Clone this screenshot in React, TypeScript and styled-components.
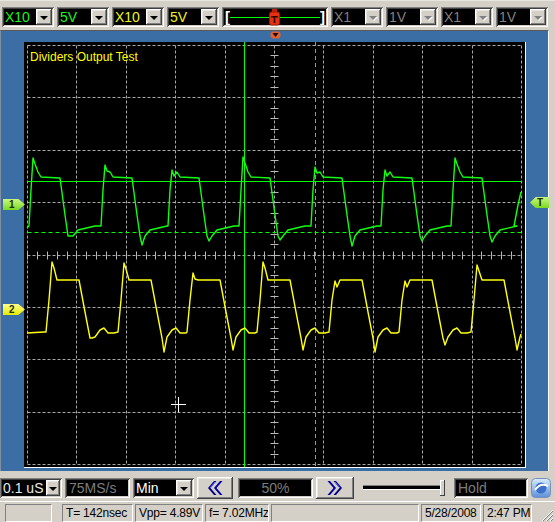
import React from 'react';
import { styled, createGlobalStyle } from 'styled-components';

const GlobalStyle = createGlobalStyle`
	html, body {
		margin: 0;
		padding: 0;
		background: #d4d0c8;
	}
	body {
		font-family: 'Liberation Sans', Arial, sans-serif;
	}
`;

// scope screen geometry, in page pixels
const SX = 24;
const SY = 42;
const SW = 501;
const SH = 425;
const GX = Array.from({ length: 11 }, (_, i) => Math.round(27 + i * 49.4) + 0.5);
const GY = Array.from({ length: 9 }, (_, i) => Math.round(45 + i * 52.375) + 0.5);

type Pt = [number, number];

// [peak x, peak y, undershoot y]
const greenCycles: number[][] = [
	[33, 158, 236],
	[105, 165, 245],
	[172, 170, 241],
	[243, 157, 240],
	[315, 167, 246],
	[385, 170, 241],
	[455, 158, 242],
];

const yellowCycles: number[][] = [
	[52, 262, 338],
	[124, 263, 352],
	[193, 273, 350],
	[263, 262, 350],
	[335, 281, 352],
	[405, 281, 345],
	[477, 265, 350],
];

function greenTrace() {
	const pts: Pt[] = [[27, 228]];
	greenCycles.forEach(([px, py, uy]) => {
		pts.push(
			[px - 4, 226], [px - 2, 190], [px, py], [px + 2, py + 6], [px + 5, 172], [px + 8, 177],
			[px + 27, 178], [px + 32, 215], [px + 35, 236], [px + 37, uy], [px + 40, 236],
			[px + 45, 230], [px + 62, 226],
		);
	});
	pts.push([514, 226], [518, 205], [521, 192]);
	return pts.map((p) => p.join(',')).join(' ');
}

function yellowTrace() {
	const pts: Pt[] = [[27, 333], [44, 332]];
	yellowCycles.forEach(([px, py, uy], i) => {
		pts.push([px - 6, 332], [px - 3, 300], [px, py], [px + 2, py + 6], [px + 5, 280], [px + 27, 280]);
		pts.push([px + 33, 312], [px + 38, 338], [px + 40, uy], [px + 43, 337]);
		if (i < yellowCycles.length - 1) {
			pts.push([px + 48, 330], [px + 52, 328], [px + 56, 333], [px + 62, 333]);
		} else {
			pts.push([521, 334]);
		}
	});
	return pts.map((p) => p.join(',')).join(' ');
}

interface ComboProps {
	text: string;
	color: string;
	width: number;
	button?: number;
	disabled?: boolean;
}

function Combo({ text, color, width, button = 16, disabled }: ComboProps) {
	return (
		<ComboBox $width={width}>
			<ComboText $color={color}>{text}</ComboText>
			<DropButton $width={button}>
				<Arrow $disabled={disabled} />
			</DropButton>
		</ComboBox>
	);
}

function Chevrons({ dir }: { dir: 'left' | 'right' }) {
	const flip = dir === 'right' ? 'scale(-1,1) translate(-16,0)' : undefined;
	return (
		<svg width='16' height='16' viewBox='0 0 16 16'>
			<g transform={flip}>
				<polygon points='7,1 9.5,1 3.5,8 9.5,15 7,15 1,8' fill='#000080' />
				<polygon points='13,1 15.5,1 9.5,8 15.5,15 13,15 7,8' fill='#0000a0' />
				<polyline points='8,2 3,8' stroke='#6070ff' strokeWidth='1' fill='none' />
			</g>
		</svg>
	);
}

function App() {
	const ticksX = Array.from({ length: 51 }, (_, i) => Math.round(27 + i * 9.88) + 0.5);
	const ticksY = Array.from({ length: 41 }, (_, i) => Math.round(45 + i * 10.475) + 0.5);

	return (
		<Window>
			<GlobalStyle />
			<TopBar>
				<Combo text='X10' color='#20f020' width={52} />
				<Combo text='5V' color='#20f020' width={52} />
				<Combo text='X10' color='#f0f020' width={52} />
				<Combo text='5V' color='#f0f020' width={52} />
				<TriggerBar>
					<Bracket>[</Bracket>
					<TriggerLine />
					<TriggerHandle width='11' height='17' viewBox='0 0 11 17'>
						<rect x='3' y='0' width='5' height='3' fill='#c02000' />
						<rect x='0.5' y='3' width='10' height='13' rx='2' fill='#e83010' stroke='#a01800' />
						<rect x='2' y='7' width='7' height='1.5' fill='#300000' />
						<rect x='4.7' y='7' width='1.6' height='7' fill='#300000' />
					</TriggerHandle>
					<Bracket>]</Bracket>
				</TriggerBar>
				<Combo text='X1' color='#808080' width={52} disabled />
				<Combo text='1V' color='#808080' width={52} disabled />
				<Combo text='X1' color='#808080' width={52} disabled />
				<Combo text='1V' color='#808080' width={52} disabled />
			</TopBar>

			<ScopeFrame>
				<TopMarker width='11' height='8' viewBox='0 0 11 8'>
					<rect x='0.5' y='0.5' width='10' height='7' rx='3' fill='#e06030' />
					<polygon points='2.5,2 8.5,2 5.5,6' fill='#200000' />
				</TopMarker>
				<Screen>
					<svg width={SW} height={SH} viewBox={`${SX} ${SY} ${SW} ${SH}`}>
						<g stroke='#a8a8a8' strokeWidth='1' strokeDasharray='3 2' fill='none'>
							{GX.map((x) => (
								<line key={'x' + x} x1={x} y1={GY[0]} x2={x} y2={GY[8]} />
							))}
							{GY.map((y) => (
								<line key={'y' + y} x1={GX[0]} y1={y} x2={GX[10]} y2={y} />
							))}
						</g>
						<g stroke='#b8b8b8' strokeWidth='1'>
							{ticksX.map((x) => (
								<line key={'tx' + x} x1={x} y1={GY[4] - 4} x2={x} y2={GY[4] + 4} />
							))}
							{ticksY.map((y) => (
								<line key={'ty' + y} x1={GX[5] - 4} y1={y} x2={GX[5] + 4} y2={y} />
							))}
						</g>
						<text x='30' y='61' fill='#ffff00' fontSize='12' fontFamily="'Liberation Sans', Arial, sans-serif">
							Dividers Output Test
						</text>
						<g stroke='#00ff00' strokeWidth='1' fill='none'>
							<line x1='244.5' y1={SY} x2='244.5' y2={SY + SH} />
							<line x1='315.5' y1={SY} x2='315.5' y2={SY + SH} strokeDasharray='4 3' />
							<line x1={GX[0]} y1='181.5' x2={GX[10]} y2='181.5' />
							<line x1={GX[0]} y1='232.5' x2={GX[10]} y2='232.5' strokeDasharray='4 3' />
						</g>
						<polyline points={greenTrace()} stroke='#10ff10' strokeWidth='1.4' fill='none' strokeLinejoin='round' />
						<polyline points={yellowTrace()} stroke='#ffff10' strokeWidth='1.4' fill='none' strokeLinejoin='round' />
						<g stroke='#ffffff' strokeWidth='1'>
							<line x1='171' y1='404.5' x2='186' y2='404.5' />
							<line x1='178.5' y1='397' x2='178.5' y2='412' />
						</g>
					</svg>
				</Screen>
				<Tag $top={168} $left={2} $color='#7cd820' $light='#c8f880'>
					1
				</Tag>
				<Tag $top={273} $left={2} $color='#e8e800' $light='#ffff90'>
					2
				</Tag>
				<Tag $top={166} $left={529} $color='#7cd820' $light='#c8f880' $flip>
					T
				</Tag>
			</ScopeFrame>

			<BottomBar>
				<Combo text='0.1 uS' color='#e8e8e8' width={62} button={14} />
				<ReadBox $width={65}>75MS/s</ReadBox>
				<Combo text='Min' color='#ffffff' width={61} />
				<NavButton $width={36}>
					<Chevrons dir='left' />
				</NavButton>
				<ReadBox $width={75} $ml={2} $center>
					50%
				</ReadBox>
				<NavButton $width={38}>
					<Chevrons dir='right' />
				</NavButton>
				<Slider>
					<SliderTrack />
					<SliderThumb />
				</Slider>
				<ReadBox $width={74} $ml={2}>
					Hold
				</ReadBox>
				<AppIcon width='20' height='20' viewBox='0 0 20 20'>
					<defs>
						<linearGradient id='ig' x1='0' y1='0' x2='0' y2='1'>
							<stop offset='0' stopColor='#d8ecff' />
							<stop offset='1' stopColor='#5d8fd8' />
						</linearGradient>
					</defs>
					<rect x='0.5' y='0.5' width='19' height='19' rx='4' fill='url(#ig)' stroke='#7890b8' />
					<circle cx='10' cy='10' r='5.5' fill='#3a70c8' />
					<path d='M4 12 C 8 6, 13 6, 17 8' stroke='#ffffff' strokeWidth='2' fill='none' />
				</AppIcon>
			</BottomBar>

			<StatusBar>
				<Panel $width={47} />
				<Panel $width={71} $gap={8}>
					T= 142nsec
				</Panel>
				<Panel $width={68}>Vpp= 4.89V</Panel>
				<Panel $width={64}>f= 7.02MHz</Panel>
				<Panel $width={148} />
				<Panel $width={60}>5/28/2008</Panel>
				<Panel $width={49}>2:47 PM</Panel>
				<Grip width='14' height='14' viewBox='0 0 14 14'>
					<g strokeWidth='1'>
						<line x1='13' y1='2' x2='2' y2='13' stroke='#fff' />
						<line x1='13' y1='3' x2='3' y2='13' stroke='#808080' />
						<line x1='13' y1='6' x2='6' y2='13' stroke='#fff' />
						<line x1='13' y1='7' x2='7' y2='13' stroke='#808080' />
						<line x1='13' y1='10' x2='10' y2='13' stroke='#fff' />
						<line x1='13' y1='11' x2='11' y2='13' stroke='#808080' />
					</g>
				</Grip>
			</StatusBar>
		</Window>
	);
}

export default App;

const sunken = `
	box-shadow: inset 1px 1px #808080, inset -1px -1px #ffffff, inset 2px 2px #404040, inset -2px -2px #d4d0c8;
`;

const raised = `
	box-shadow: inset -1px -1px #404040, inset 1px 1px #ffffff, inset -2px -2px #808080, inset 2px 2px #e8e6e0;
`;

const Window = styled.div`
	width: 555px;
	height: 522px;
	display: flex;
	flex-direction: column;
	background: #d4d0c8;
	overflow: hidden;
	border-top: 1px solid #e8e6e0;
	box-sizing: border-box;
`;

const TopBar = styled.div`
	height: 29px;
	display: flex;
	align-items: flex-start;
	gap: 3px;
	padding: 6px 0 0 2px;
	box-sizing: border-box;
`;

const ComboBox = styled.div<{ $width: number }>`
	width: ${(p) => p.$width}px;
	height: 20px;
	display: flex;
	padding: 2px;
	box-sizing: border-box;
	background: #000;
	${sunken}
`;

const ComboText = styled.div<{ $color: string }>`
	flex: 1;
	color: ${(p) => p.$color};
	font-size: 14px;
	line-height: 16px;
	padding-left: 1px;
	white-space: nowrap;
	overflow: hidden;
`;

const DropButton = styled.div<{ $width: number }>`
	width: ${(p) => p.$width}px;
	height: 16px;
	flex-shrink: 0;
	display: flex;
	align-items: center;
	justify-content: center;
	background: #d4d0c8;
	${raised}
`;

const Arrow = styled.div<{ $disabled?: boolean }>`
	width: 0;
	height: 0;
	border-left: 4px solid transparent;
	border-right: 4px solid transparent;
	border-top: 4px solid ${(p) => (p.$disabled ? '#808080' : '#000')};
	margin-top: 1px;
	filter: ${(p) => (p.$disabled ? 'drop-shadow(1px 1px 0 #fff)' : 'none')};
`;

const TriggerBar = styled.div`
	width: 106px;
	height: 20px;
	display: flex;
	align-items: center;
	position: relative;
	padding: 0 3px;
	box-sizing: border-box;
	background: #000;
	${sunken}
`;

const Bracket = styled.span`
	color: #ffffff;
	font-size: 15px;
	font-weight: bold;
	line-height: 16px;
`;

const TriggerLine = styled.div`
	flex: 1;
	height: 1px;
	background: #00ff00;
`;

const TriggerHandle = styled.svg`
	position: absolute;
	left: 47px;
	top: 2px;
`;

const ScopeFrame = styled.div`
	position: relative;
	width: 549px;
	height: 441px;
	padding: 11px 0 0 23px;
	box-sizing: border-box;
	background: #3a6ea5;
	border-top: 1px solid #5a5a5a;
	border-left: 1px solid #8090a0;
	border-right: 1px solid #ffffff;
`;

const TopMarker = styled.svg`
	position: absolute;
	left: 269px;
	top: 0;
`;

const Screen = styled.div`
	width: ${SW}px;
	height: ${SH}px;
	background: #000;
	border-right: 1px solid #ffffff;
	border-bottom: 1px solid #ffffff;
	svg {
		display: block;
	}
`;

const Tag = styled.div<{ $top: number; $left: number; $color: string; $light: string; $flip?: boolean }>`
	position: absolute;
	top: ${(p) => p.$top}px;
	left: ${(p) => p.$left}px;
	width: ${(p) => (p.$flip ? 19 : 22)}px;
	height: 11px;
	background: linear-gradient(180deg, ${(p) => p.$light}, ${(p) => p.$color});
	clip-path: ${(p) =>
		p.$flip
			? 'polygon(0 50%, 30% 0, 100% 0, 100% 100%, 30% 100%)'
			: 'polygon(0 0, 70% 0, 100% 50%, 70% 100%, 0 100%)'};
	color: #203000;
	font-size: 10px;
	font-weight: bold;
	line-height: 11px;
	text-align: ${(p) => (p.$flip ? 'right' : 'left')};
	padding: ${(p) => (p.$flip ? '0 6px 0 0' : '0 0 0 6px')};
	box-sizing: border-box;
`;

const BottomBar = styled.div`
	height: 30px;
	display: flex;
	align-items: flex-start;
	gap: 3px;
	padding-top: 7px;
	box-sizing: border-box;
`;

const ReadBox = styled.div<{ $width: number; $center?: boolean; $ml?: number }>`
	width: ${(p) => p.$width}px;
	height: 20px;
	margin-left: ${(p) => p.$ml ?? 0}px;
	padding: 2px 4px;
	box-sizing: border-box;
	background: #000;
	color: #7c7c7c;
	font-size: 14px;
	line-height: 16px;
	text-align: ${(p) => (p.$center ? 'center' : 'left')};
	${sunken}
`;

const NavButton = styled.div<{ $width: number }>`
	width: ${(p) => p.$width}px;
	height: 22px;
	margin-top: -1px;
	display: flex;
	align-items: center;
	justify-content: center;
	background: #d4d0c8;
	${raised}
`;

const Slider = styled.div`
	width: 90px;
	height: 20px;
	margin-left: 2px;
	position: relative;
	display: flex;
	align-items: center;
`;

const SliderTrack = styled.div`
	flex: 1;
	height: 3px;
	margin: 0 4px;
	background: #000;
	border-bottom: 1px solid #ffffff;
	box-shadow: 0 -1px 0 #808080;
`;

const SliderThumb = styled.div`
	position: absolute;
	right: 4px;
	top: 2px;
	width: 5px;
	height: 16px;
	background: #d4d0c8;
	box-shadow: inset -1px -1px #404040, inset 1px 1px #ffffff;
`;

const AppIcon = styled.svg`
	margin-left: 0;
`;

const StatusBar = styled.div`
	flex: 1;
	display: flex;
	align-items: flex-start;
	gap: 2px;
	padding: 2px 0 0 5px;
	box-sizing: border-box;
	border-top: 1px solid #ffffff;
`;

const Panel = styled.div<{ $width: number; $gap?: number }>`
	width: ${(p) => p.$width}px;
	height: 18px;
	margin-left: ${(p) => p.$gap ?? 0}px;
	padding-left: 3px;
	box-sizing: border-box;
	border-top: 1px solid #808080;
	border-left: 1px solid #808080;
	border-bottom: 1px solid #ffffff;
	border-right: 1px solid #ffffff;
	color: #000;
	font-size: 12px;
	letter-spacing: -0.2px;
	line-height: 16px;
	white-space: nowrap;
	overflow: hidden;
`;

const Grip = styled.svg`
	margin-left: auto;
	margin-top: 4px;
	margin-right: 1px;
`;
